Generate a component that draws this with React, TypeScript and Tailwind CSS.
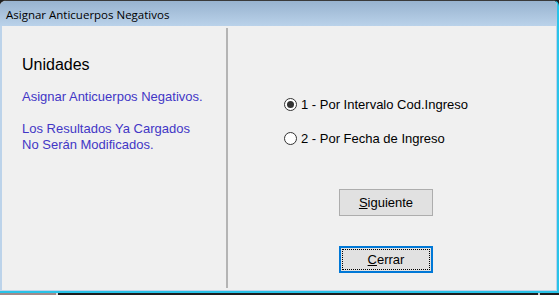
import React from "react";

function Radio({ checked, label }: { checked?: boolean; label: string }) {
  return (
    <label className="flex items-center gap-[4px] text-[13px] text-black leading-none">
      <span className="w-[13px] h-[13px] rounded-full border border-[#333] bg-white flex items-center justify-center">
        {checked && <span className="w-[7px] h-[7px] rounded-full bg-[#333]" />}
      </span>
      <span>{label}</span>
    </label>
  );
}

function Button({ children, focused }: { children: React.ReactNode; focused?: boolean }) {
  return (
    <button
      className={
        focused
          ? "w-[94px] h-[27px] bg-[#e1e1e1] border-2 border-[#0078d7] p-[1px] text-[13px] text-black"
          : "w-[94px] h-[27px] bg-[#e1e1e1] border border-[#adadad] text-[13px] text-black"
      }
    >
      {focused ? (
        <span className="w-full h-full flex items-center justify-center border border-dotted border-black">
          {children}
        </span>
      ) : (
        children
      )}
    </button>
  );
}

export default function App() {
  return (
    <div
      className="w-[559px] h-[295px] flex flex-col bg-[#1e1e1e] overflow-hidden"
      style={{ fontFamily: "'Liberation Sans', Arial, sans-serif" }}
    >
      <div className="flex-1 flex flex-col rounded-t-[6px] border-t border-[#3a3a3a] border-r-2 border-r-[#29c3e8] border-b-2 border-b-[#29c3e8] bg-[#f0f0f0] overflow-hidden">
        <div className="h-[25px] shrink-0 bg-gradient-to-b from-[#98b3cf] to-[#bad2ea] flex items-center pl-[6px] pt-[2px]">
          <span
            className="text-[11.5px] text-black"
            style={{ fontFamily: "'Open Sans', 'Noto Sans', sans-serif" }}
          >
            Asignar Anticuerpos Negativos
          </span>
        </div>
        <div className="flex-1 flex border-l-2 border-l-[#bcd3ea] border-r border-r-[#bcd3ea] border-b border-b-[#bcd3ea]">
          <div className="w-[224px] pl-[20px] pt-[29px]">
            <div className="text-[16px] text-black leading-[20px]">Unidades</div>
            <div className="mt-[14px] text-[13px] text-[#4236c6] leading-[16px]">
              Asignar Anticuerpos Negativos.
            </div>
            <div className="mt-[16px] text-[13px] text-[#4236c6] leading-[16px]">
              Los Resultados Ya Cargados
              <br />
              No Serán Modificados.
            </div>
          </div>
          <div className="mt-[2px] mb-[2px] w-[2px] bg-[#b4b4b4]" />
          <div className="flex-1 flex flex-col pl-[56px] pt-[72px]">
            <div className="flex flex-col gap-[21px]">
              <Radio checked label="1 - Por Intervalo Cod.Ingreso" />
              <Radio label="2 - Por Fecha de Ingreso" />
            </div>
            <div className="pl-[55px] mt-[44px] flex flex-col gap-[30px]">
              <Button>
                <span className="underline">S</span>iguiente
              </Button>
              <Button focused>
                <span className="underline">C</span>errar
              </Button>
            </div>
          </div>
        </div>
      </div>
      <div className="h-[2px] shrink-0 flex">
        <div className="w-[56px] bg-[#a08a8a]" />
        <div className="w-[2px] bg-[#ddd]" />
        <div className="w-[480px]" />
        <div className="w-[2px] bg-[#ccc]" />
      </div>
    </div>
  );
}
